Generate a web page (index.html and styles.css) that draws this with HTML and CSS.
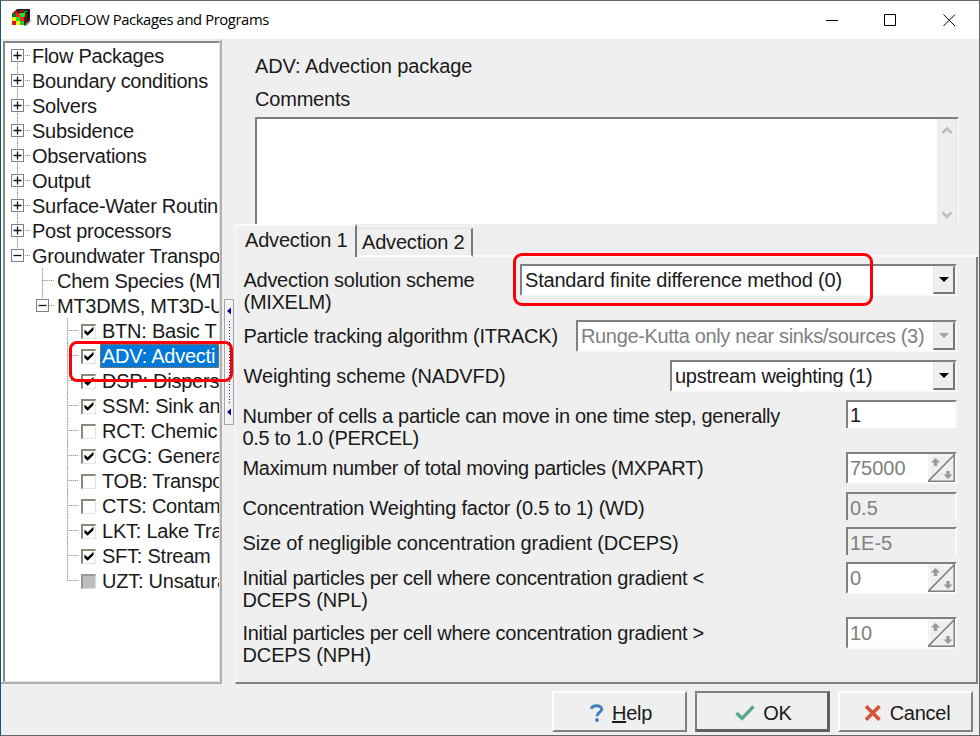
FILE: index.html
```html
<!DOCTYPE html>
<html lang="en">
<head>
<meta charset="utf-8">
<title>MODFLOW Packages and Programs</title>
<link rel="stylesheet" href="styles.css">
</head>
<body>
<svg width="0" height="0" class="defs">
  <defs>
    <symbol id="plus" viewBox="0 0 13 13"><rect x=".5" y=".5" width="12" height="12" fill="#fff" stroke="#808080"/><path d="M2.500 6.500h8M6.500 2.500v8" stroke="#111" stroke-width="1.300"/></symbol>
    <symbol id="minus" viewBox="0 0 13 13"><rect x=".5" y=".5" width="12" height="12" fill="#fff" stroke="#808080"/><path d="M2.500 6.500h8" stroke="#111" stroke-width="1.300"/></symbol>
    <symbol id="tick" viewBox="0 0 11 11"><path d="M1.500 3.500v3.400l3.200 2.900L10.500 4V.7L4.700 6.200z" fill="#000"/></symbol>
    <symbol id="spin" viewBox="0 0 27 28"><path d="M1.500 27V1.500H25" fill="none" stroke="#fafafa"/><path d="M0 27.300h26.300V0M.5 27L26 1" fill="none" stroke="#808080" stroke-width="1.600"/><path d="M7.500 4l4.500 4.500H9.200V12H5.800V8.500H3zM20 25l-4.500-4.500h2.800V17h3.400v3.500h2.800z" fill="#999"/></symbol>
  </defs>
</svg>
<div class="window">
  <header class="titlebar">
    <svg class="appicon" width="20" height="19" viewBox="0 0 20 19">
      <path d="M1 4L5 0h13v13l-5 4z" fill="#222"/>
      <path d="M3 2h4l-2 2H1zM9 1h3l-2 2H7z" fill="#d00"/><path d="M12 2h4l-2 2h-3z" fill="#198c28"/>
      <path d="M0 4h4v4H0z" fill="#087928"/><path d="M4 4h4v4H4z" fill="#f22"/><path d="M8 4h5v4H8z" fill="#19e519"/>
      <path d="M0 8h4v4H0z" fill="#f8ee16"/><path d="M4 8h4v4H4z" fill="#18e528"/><path d="M8 8h4v4H8z" fill="#f22"/>
      <path d="M0 12h4v4H0z" fill="#e11"/><path d="M4 12h4v4H4z" fill="#f8ee16"/><path d="M8 12h4v4H8z" fill="#12d330"/>
      <path d="M13 5l2-2v13h-3z" fill="#771010"/><path d="M15 3l2-1v12l-2 2z" fill="#111"/><path d="M14 16l5-5" stroke="#aaa" stroke-width="1.500"/>
    </svg>
    <h1>MODFLOW Packages and Programs</h1>
    <svg class="controls" width="130" height="13" viewBox="0 0 130 13" fill="none" stroke="#000">
      <path d="M0 6.500h12M58.500.5h11v11h-11z"/><path d="M117.500.5l11.500 11.500M129 .5L117.500 12"/>
    </svg>
  </header>
  <main>
    <nav class="tree">
      <ul class="roots">
        <li><svg class="box"><use href="#plus"/></svg><span>Flow Packages</span></li>
        <li><svg class="box"><use href="#plus"/></svg><span>Boundary conditions</span></li>
        <li><svg class="box"><use href="#plus"/></svg><span>Solvers</span></li>
        <li><svg class="box"><use href="#plus"/></svg><span>Subsidence</span></li>
        <li><svg class="box"><use href="#plus"/></svg><span>Observations</span></li>
        <li><svg class="box"><use href="#plus"/></svg><span>Output</span></li>
        <li><svg class="box"><use href="#plus"/></svg><span>Surface-Water Routin</span></li>
        <li><svg class="box"><use href="#plus"/></svg><span>Post processors</span></li>
        <li><svg class="box"><use href="#minus"/></svg><span>Groundwater Transpo</span></li>
      </ul>
      <ul class="mid">
        <li><i class="box"></i><span>Chem Species (MT</span></li>
        <li><svg class="box"><use href="#minus"/></svg><span>MT3DMS, MT3D-U</span></li>
      </ul>
      <ul class="leaves">
        <li><b class="check"><svg><use href="#tick"/></svg></b><span>BTN: Basic T</span></li>
        <li><b class="check"><svg><use href="#tick"/></svg></b><span class="selected">ADV: Advecti</span></li>
        <li><b class="check"><svg><use href="#tick"/></svg></b><span>DSP: Dispers</span></li>
        <li><b class="check"><svg><use href="#tick"/></svg></b><span>SSM: Sink an</span></li>
        <li><b class="check"></b><span>RCT: Chemic</span></li>
        <li><b class="check"><svg><use href="#tick"/></svg></b><span>GCG: Genera</span></li>
        <li><b class="check"></b><span>TOB: Transpo</span></li>
        <li><b class="check"></b><span>CTS: Contam</span></li>
        <li><b class="check"><svg><use href="#tick"/></svg></b><span>LKT: Lake Tra</span></li>
        <li><b class="check"><svg><use href="#tick"/></svg></b><span>SFT: Stream</span></li>
        <li><b class="check off"></b><span>UZT: Unsatura</span></li>
      </ul>
    </nav>
    <div class="splitter">
      <svg width="10" height="126" viewBox="0 0 10 126"><path d="M.5 125.500V.5h9v125z" fill="#f2f2f2" stroke="#a2a2a2"/><path d="M1.500 124V1.500H8" fill="none" stroke="#fff"/><path d="M7 8.500v7L3 12zM7 109.500v7L3 113z" fill="#00008b"/><path d="M5.500 22v83" stroke="#2020a0" stroke-dasharray="1 2"/></svg>
    </div>
    <section class="content">
      <h2>ADV: Advection package</h2>
      <p class="caption">Comments</p>
      <div class="memo"><div class="scroll">
        <svg width="12" height="9" viewBox="0 0 12 9"><path d="M1.500 7l4.500-4.500L10.500 7" fill="none" stroke="#bdbdbd" stroke-width="2.500"/></svg>
        <svg width="12" height="9" viewBox="0 0 12 9"><path d="M1.500 1.500L6 6l4.500-4.500" fill="none" stroke="#bdbdbd" stroke-width="2.500"/></svg>
      </div></div>
      <div class="tabs"><div class="tab active">Advection 1</div><div class="tab">Advection 2</div><div class="rest"></div></div>
      <div class="form">
        <div class="row r56"><label class="in">Advection solution scheme<br>(MIXELM)</label>
          <div class="field combo w1"><span>Standard finite difference method (0)</span><b class="drop"></b></div></div>
        <div class="row r40"><label class="in wide">Particle tracking algorithm (ITRACK)</label>
          <div class="field combo w2 disabled"><span>Runge-Kutta only near sinks/sources (3)</span><b class="drop"></b></div></div>
        <div class="row r40"><label class="in wider">Weighting scheme (NADVFD)</label>
          <div class="field combo w3"><span>upstream weighting (1)</span><b class="drop"></b></div></div>
        <div class="row r52"><label class="tight">Number of cells a particle can move in one time step, generally<br>0.5 to 1.0 (PERCEL)</label>
          <div class="field edit"><span>1</span></div></div>
        <div class="row r40"><label class="tight">Maximum number of total moving particles (MXPART)</label>
          <div class="field spin"><span>75000</span><svg><use href="#spin"/></svg></div></div>
        <div class="row r35"><label class="wide">Concentration Weighting factor (0.5 to 1) (WD)</label>
          <div class="field edit gray"><span>0.5</span></div></div>
        <div class="row r35"><label class="wider">Size of negligible concentration gradient (DCEPS)</label>
          <div class="field edit gray"><span>1E-5</span></div></div>
        <div class="row r55"><label>Initial particles per cell where concentration gradient &lt;<br><span class="wider">DCEPS (NPL)</span></label>
          <div class="field spin"><span>0</span><svg><use href="#spin"/></svg></div></div>
        <div class="row r55"><label>Initial particles per cell where concentration gradient &gt;<br><span class="wider">DCEPS (NPH)</span></label>
          <div class="field spin"><span>10</span><svg><use href="#spin"/></svg></div></div>
      </div>
    </section>
  </main>
  <footer>
    <button><svg width="14" height="18" viewBox="0 0 14 18"><path d="M1.500 5C2 .8 11.800.6 11.800 5.200c0 3.200-4.800 3-4.800 7" fill="none" stroke="#3f7fbf" stroke-width="2.900"/><circle cx="7" cy="16" r="1.900" fill="#3f7fbf"/></svg><span><u>H</u>elp</span></button>
    <button class="default"><svg width="20" height="16" viewBox="0 0 20 16"><path d="M1.500 8l5.500 5.500L18.500 1.500" fill="none" stroke="#55a988" stroke-width="3.300"/></svg><span>OK</span></button>
    <button><svg width="18" height="16" viewBox="0 0 18 16"><path d="M2 1.200l13.500 13.500M15.500 1.200L2 14.700" fill="none" stroke="#d5553b" stroke-width="3.700"/></svg><span>Cancel</span></button>
  </footer>
</div>
<div class="mark mark-tree"></div>
<div class="mark mark-combo"></div>
</body>
</html>
```
FILE: styles.css
```css
* { box-sizing: border-box; margin: 0; padding: 0; }
body { width: 980px; height: 736px; overflow: hidden; position: relative; background: #efefef; color: #1a1a1a; font: 20px/23px "Liberation Sans", sans-serif; letter-spacing: -0.28px; }
.defs { position: absolute; }
.window { width: 980px; height: 736px; border: 1px solid #69676b; border-left-color: #1b5676; display: flex; flex-direction: column; }
.titlebar { height: 38px; flex: none; background: #fff; display: flex; align-items: center; padding: 0 23px 0 11px; }
.appicon { margin-top: -3px; }
h1 { font: 14.8px/20px "Open Sans", "Noto Sans", sans-serif; letter-spacing: -0.4px; margin: -2px 0 0 4px; color: #000; white-space: nowrap; }
.controls { margin-left: auto; }
main { display: flex; height: 646px; flex: none; }
ul { list-style: none; }
.tree { width: 221px; height: 645px; flex: none; padding: 3px 0 0 4px; background: #fff; border: solid; border-width: 2px 2px 2px 0; border-color: #eee #b0b0b0 #b0b0b0; overflow: hidden; position: relative; }
.tree::before { content: ""; position: absolute; left: 2px; top: 0; right: 0; bottom: 0; border: solid; border-width: 2px 1px 1px 2px; border-color: #888 #e4e4e4 #e4e4e4 #888; }
.tree ul { width: 214px; overflow: hidden; }
.tree .roots { margin-top: -1px; }
.tree li { height: 25px; display: flex; align-items: center; white-space: nowrap; position: relative; }
.tree li span { padding: 2px 0 0 2px; letter-spacing: -0.28px; }
.box { width: 13px; height: 13px; flex: none; position: relative; z-index: 1; }
.tree li::before { content: ""; position: absolute; top: 0; height: 25px; width: 1px; background: repeating-linear-gradient(#999 0 1px, #ddd 1px 2px); }
.tree li::after { content: ""; position: absolute; top: 12px; height: 1px; background: repeating-linear-gradient(90deg, #999 0 1px, #ddd 1px 2px); }
.roots li { padding-left: 6px; }
.roots li span { margin-left: 6px; }
.roots li::before { left: 12px; }
.roots li:first-child::before { top: 12px; height: 13px; }
.roots li:last-child::before { height: 12px; }
.roots li::after { left: 20px; width: 5px; }
.mid li { padding-left: 31px; }
.mid li span { margin-left: 6px; }
.mid li::before { left: 37px; }
.mid li:last-child::before { height: 12px; }
.mid li::after { left: 38px; width: 11px; }
.leaves li { padding-left: 76px; }
.tree .leaves li span { margin-left: 4px; padding-left: 2px; letter-spacing: -0.24px; }
.leaves li::before { left: 62px; }
.leaves li:last-child::before { height: 12px; }
.leaves li::after { left: 62px; width: 12px; }
.check { width: 15px; height: 15px; border: solid; border-width: 2px 1px 1px 2px; border-color: #88887c #e6e5dc #e6e5dc #88887c; background: #fff; flex: none; margin-top: 2px; }
.check svg { display: block; width: 11px; height: 11px; }
.check.off { background: #bdbdbd; border-color: #999 #ddd #ddd #999; }
.tree .selected { background: #0078d7; color: #fff; outline: 1px dotted #d87020; outline-offset: -1px; height: 24px; padding-top: 1px; flex: 1; }
.splitter { width: 13px; flex: none; padding: 260px 0 0 2px; }
.splitter svg { display: block; }
.content { width: 743px; flex: none; }
h2 { font-size: 20px; font-weight: normal; padding: 16px 0 0 20px; letter-spacing: -0.1px; }
.caption { padding: 10px 0 0 20px; letter-spacing: -0.2px; }
.memo { margin: 6px 0 0 20px; width: 704px; height: 107px; background: #fff; border: solid; border-width: 2px 2px 0; border-color: #7d7d7d #f7f7f7 #7d7d7d #7d7d7d; display: flex; justify-content: flex-end; }
.scroll { width: 20px; background: #efefef; border-right: 1px solid #e2e2e2; padding: 7px 0 4px 4px; display: flex; flex-direction: column; justify-content: space-between; }
.tabs { height: 33px; display: flex; align-items: flex-end; }
.tab { width: 116px; height: 29px; padding: 2px 0 0 5px; border-top: 1px solid #e3e3e3; border-right: 2px solid #7a7a7a; border-bottom: 2px solid #fff; white-space: nowrap; letter-spacing: -0.18px; }
.tab.active { width: 122px; height: 33px; padding: 3px 0 0 9px; border-left: 1px solid #fafafa; border-top: 2px solid #f9f9f9; border-bottom: 0; border-radius: 3px 0 0 0; }
.rest { flex: 1; height: 2px; background: #f9f9f9; }
.form { height: 427px; padding: 7px 20px 0 6px; border: solid; border-width: 0 2px 2px 1px; border-color: #fff #808080 #808080 #fafafa; }
.row { display: flex; justify-content: space-between; margin-right: -1px; }
.row label { padding: 5px 0 0 .5px; white-space: nowrap; line-height: 22px; }
.row .in { padding-left: 1.500px; }
.wide { letter-spacing: -0.22px; }
.wider { letter-spacing: -0.13px; }
.tight { letter-spacing: -0.31px; }
.r56 { height: 56px; } .r40 { height: 40px; } .r52 { height: 52px; } .r35 { height: 35px; } .r55 { height: 55px; }
.field { display: flex; height: 32px; background: #fff; flex: none; border: solid; border-width: 2px; border-color: #808080 #f9f9f9 #f9f9f9 #808080; white-space: nowrap; }
.field span { flex: 1; padding: 3px 0 0 3px; }
.edit, .spin { width: 111px; }
.edit { height: 28px; border-bottom: 0; }
.edit span, .spin span { padding: 3px 0 0 2px; letter-spacing: 0; color: #808080; }
.edit:not(.gray) span { padding-top: 2px; color: #1a1a1a; }
.spin svg { width: 27px; height: 28px; background: #efefef; }
.gray { background: #efefef; }
.w1 { width: 437px; letter-spacing: -0.2px; } .w2 { width: 381px; letter-spacing: -0.35px; } .w3 { width: 287px; }
.disabled { color: #808080; }
.drop { width: 22px; height: 28px; background: #efefef; border: solid; border-width: 1px 2px 2px 1px; border-color: #e8e8e8 #777 #777 #e8e8e8; display: flex; justify-content: center; align-items: center; }
.drop::after { content: ""; border: solid transparent; border-width: 5px 5px 0; border-top-color: #000; }
.disabled .drop::after { border-top-color: #a0a0a0; }
footer { display: flex; gap: 8px; padding: 6px 6px 0 0; justify-content: flex-end; }
button { width: 135px; height: 41px; font: inherit; letter-spacing: -0.26px; color: #1a1a1a; background: #efefef; border: solid; border-width: 2px; border-color: #fff #808080 #808080 #fff; display: flex; align-items: center; justify-content: center; gap: 8px; padding: 3px 0 0 3px; }
.default { border-color: #808080 #606060 #606060 #808080; border-width: 2px 3px 3px 2px; padding-top: 4px; }
.mark { position: absolute; border: 3px solid #fb0008; }
.mark-tree { left: 69px; top: 341px; width: 164px; height: 41px; border-radius: 8px; }
.mark-combo { left: 513px; top: 253px; width: 360px; height: 53px; border-radius: 9px; }
```
